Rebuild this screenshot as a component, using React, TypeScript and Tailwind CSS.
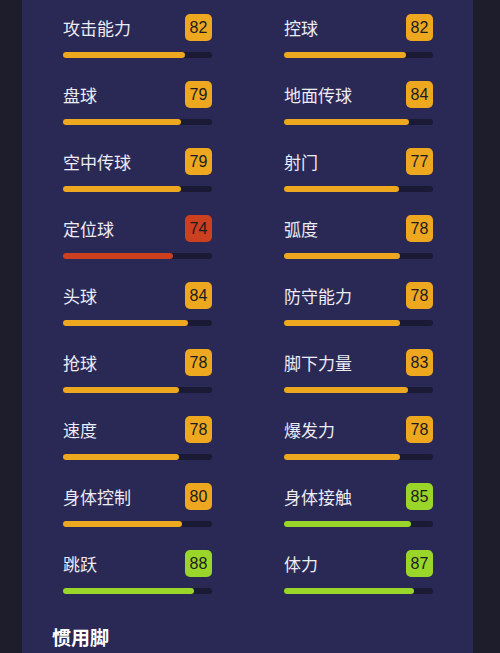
const stats: [string, number][] = [
  ["攻击能力", 82],
  ["控球", 82],
  ["盘球", 79],
  ["地面传球", 84],
  ["空中传球", 79],
  ["射门", 77],
  ["定位球", 74],
  ["弧度", 78],
  ["头球", 84],
  ["防守能力", 78],
  ["抢球", 78],
  ["脚下力量", 83],
  ["速度", 78],
  ["爆发力", 78],
  ["身体控制", 80],
  ["身体接触", 85],
  ["跳跃", 88],
  ["体力", 87],
];

const tone = (v: number) => {
  if (v >= 85) return { badge: "bg-[#9ad62a]", bar: "bg-[#9ad62a]" };
  if (v >= 75) return { badge: "bg-[#eda81f]", bar: "bg-[#eda81f]" };
  return { badge: "bg-[#cc3f1f]", bar: "bg-[#cc3f1f]" };
};

const StatItem = ({ name, value }: { name: string; value: number }) => {
  const t = tone(value);
  return (
    <div className="flex flex-col">
      <div className="flex h-[27px] items-center justify-between">
        <span className="-mt-[1px] text-[17px] leading-none text-[#ececf4] font-['Noto_Sans_CJK_SC',sans-serif]">
          {name}
        </span>
        <span
          className={`flex h-[27px] w-[27px] items-center justify-center rounded-[5px] text-[16px] text-[#1b1b22] font-['Liberation_Sans',sans-serif] ${t.badge}`}
        >
          {value}
        </span>
      </div>
      <div className="mt-[11px] h-[6px] w-full rounded-full bg-[#1a1a34]">
        <div className={`h-full rounded-full ${t.bar}`} style={{ width: `${value}%` }} />
      </div>
    </div>
  );
};

export default function App() {
  return (
    <div className="flex h-[653px] w-[500px] overflow-hidden bg-[#1d1d2c]">
      <div className="ml-[22px] w-[451px] bg-[#2a2855] pl-[41px] pr-[40px] pt-[14px]">
        <div className="grid grid-cols-2 gap-x-[72px] gap-y-[23px]">
          {stats.map(([n, v]) => (
            <StatItem key={n} name={n} value={v} />
          ))}
        </div>
        <h2 className="-ml-[11px] mt-[31px] text-[19px] leading-[24px] font-bold text-white font-['Noto_Sans_CJK_SC',sans-serif]">
          惯用脚
        </h2>
      </div>
    </div>
  );
}
